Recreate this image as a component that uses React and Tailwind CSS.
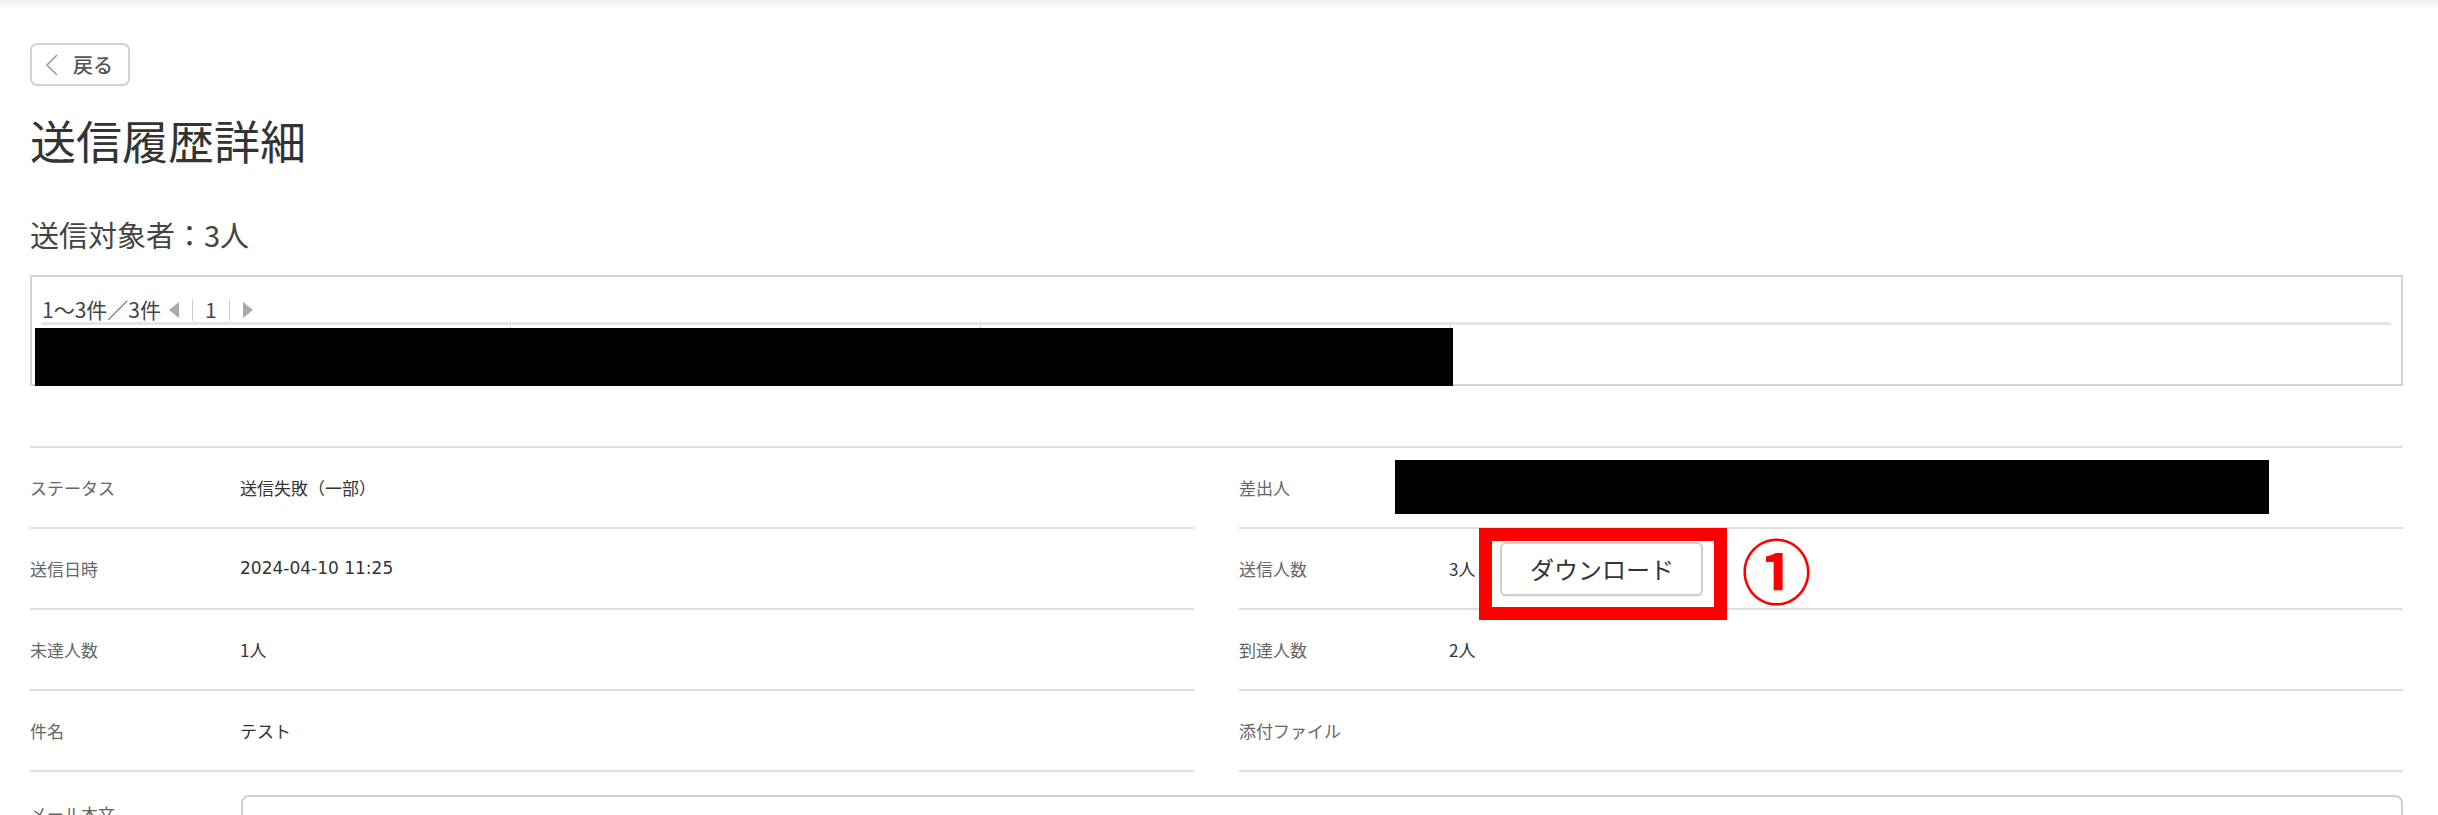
import { Fragment } from "react";

const leftRows = [
  { label: "ステータス", value: "送信失敗（一部）" },
  { label: "送信日時", value: "2024-04-10 11:25", latin: true },
  { label: "未達人数", value: "1人" },
  { label: "件名", value: "テスト" },
];

function Row({ label, children }) {
  return (
    <div className="flex h-[81px] items-center border-b-2 border-[#dedede]">
      <div className="w-[210px] shrink-0 text-[17px] text-[#666]">{label}</div>
      <div className="flex items-center text-[17px] text-[#333]">{children}</div>
    </div>
  );
}

function Tri({ dir }) {
  return (
    <svg width="10" height="16" viewBox="0 0 10 16" className="mx-[8px]">
      {dir === "left" ? (
        <polygon points="10,0 0,8 10,16" fill="#aaa" />
      ) : (
        <polygon points="0,0 10,8 0,16" fill="#aaa" />
      )}
    </svg>
  );
}

export default function App() {
  return (
    <div className="min-h-screen bg-white font-['Noto_Sans_CJK_JP','Noto_Sans',sans-serif] text-[#333]">
      <div className="h-[10px] bg-gradient-to-b from-[#eeeeee] to-white" />

      <div className="pl-[30px] pr-[35px] pt-[33px]">
        <button className="flex h-[43px] w-[100px] items-center rounded-[7px] border-2 border-[#d2d2d2] bg-white pl-[14px]">
          <svg width="12" height="22" viewBox="0 0 12 22">
            <polyline points="11,1 1,11 11,21" fill="none" stroke="#8fa3b6" strokeWidth="1.6" />
          </svg>
          <span className="ml-[15px] text-[20px] leading-none font-medium text-[#555]">戻る</span>
        </button>

        <h1 className="mt-[23px] text-[46px] leading-[60px] font-normal text-[#333]">送信履歴詳細</h1>

        <h2 className="mt-[45px] text-[29px] leading-[40px] text-[#444]">送信対象者：3人</h2>

        <div className="mt-[21px] border-2 border-[#d4d4d4] px-[10px]">
          <div className="flex items-center pt-[20px] text-[21px] leading-[25px] text-[#444]">
            <span>1〜3件／3件</span>
            <Tri dir="left" />
            <span className="mx-[5px] h-[22px] w-px bg-[#cfcfcf]" />
            <span className="mx-[7px]">1</span>
            <span className="mx-[5px] h-[22px] w-px bg-[#cfcfcf]" />
            <Tri dir="right" />
          </div>
          <div className="flex h-[6px] border-t-[3px] border-[#e4e4e4]">
            <div className="w-[469px] border-r border-[#d8d8d8]" />
            <div className="w-[470px] border-r border-[#d8d8d8]" />
            <div className="w-[470px] border-r border-[#d8d8d8]" />
            <div className="flex-1" />
          </div>
          <div className="relative h-[56px]">
            <div className="absolute left-[-7px] top-0 h-[58px] w-[1418px] bg-black" />
          </div>
        </div>

        <div className="mt-[60px] border-t-2 border-[#dedede]">
          <div className="grid grid-cols-2 gap-x-[45px]">
            <div>
              {leftRows.map((r) => (
                <Row key={r.label} label={r.label}>
                  <span className={r.latin ? "font-['DejaVu_Sans','Noto_Sans_CJK_JP',sans-serif] text-[17px]" : ""}>
                    {r.value}
                  </span>
                </Row>
              ))}
            </div>
            <div>
              <Row label="差出人">
                <div className="relative h-[20px] w-[1px]">
                  <div className="absolute left-[-54px] top-[-18px] h-[54px] w-[874px] bg-black" />
                </div>
              </Row>
              <Row label="送信人数">
                <span>3人</span>
                <div className="relative ml-[25px]">
                  <button className="h-[54px] w-[203px] rounded-[6px] border-2 border-[#cfcfcf] bg-white text-[24px] text-[#333] shadow-[0_1px_1px_rgba(0,0,0,0.08)]">
                    ダウンロード
                  </button>
                  <div className="pointer-events-none absolute left-[-21px] top-[-14px] h-[92px] w-[248px] border-[13px] border-[#ff0000]" />
                </div>
                <span className="ml-[38px] text-[70px] leading-none font-bold text-[#ff0000]">①</span>
              </Row>
              <Row label="到達人数">2人</Row>
              <Row label="添付ファイル" />
            </div>
          </div>

          <div className="mt-[23px] flex items-start">
            <div className="w-[211px] shrink-0 pt-[6px] text-[17px] text-[#666]">メール本文</div>
            <div className="h-[160px] flex-1 rounded-[8px] border-2 border-[#d0d0d0] px-[10px] pt-[12px] text-[17px] text-[#333]">
              テスト
            </div>
          </div>
        </div>
      </div>
    </div>
  );
}
